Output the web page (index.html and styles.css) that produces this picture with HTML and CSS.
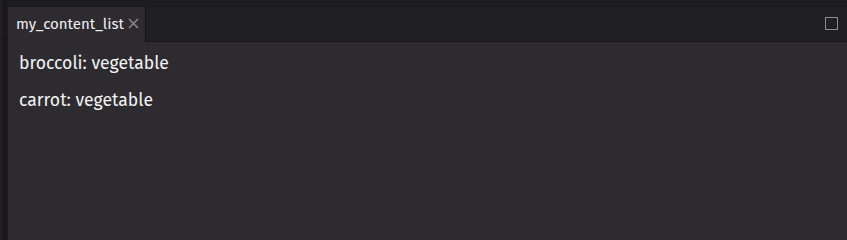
FILE: index.html
```html
<!DOCTYPE html>
<html>
<head>
<meta charset="utf-8">
<link rel="stylesheet" href="styles.css">
</head>
<body>
<div class="app">
  <div class="gutter"><div class="gutter-line"></div></div>
  <div class="main">
    <div class="topstrip"></div>
    <div class="panel">
      <div class="header">
        <div class="tab">
          <span class="tab-title">my_content_list</span>
          <svg class="tab-close" width="11" height="11" viewBox="0 0 11 11"><path d="M1 1L10 10M10 1L1 10" stroke="#8a898c" stroke-width="1.5" fill="none"/></svg>
        </div>
        <div class="header-fill"></div>
      </div>
      <div class="content">
        <div class="item">broccoli: vegetable</div>
        <div class="item">carrot: vegetable</div>
      </div>
    </div>
  </div>
  <div class="max-btn"></div>
</div>
</body>
</html>
```
FILE: styles.css
```css
html, body {
  margin: 0;
  padding: 0;
  height: 100%;
  background: #2d2b2f;
  font-family: "Fira Sans", "Open Sans", "Noto Sans", sans-serif;
  overflow: hidden;
}
.app {
  display: flex;
  height: 100vh;
}
.gutter {
  width: 8px;
  display: flex;
  flex-direction: column;
  background: #1a1a1c;
  border-left: 2px solid #212123;
  box-sizing: border-box;
}
.gutter-line { height: 40px; border-bottom: 1px solid #141415; box-sizing: border-box; }
.main {
  flex: 1;
  display: flex;
  flex-direction: column;
}
.topstrip {
  height: 7px;
  background: #1d1c1f;
  box-sizing: border-box;
  border-bottom: 1px solid #19181a;
}
.panel {
  flex: 1;
  display: flex;
  flex-direction: column;
  background: #2d2b2f;
}
.header {
  height: 35px;
  display: flex;
  align-items: stretch;
  background: #201f22;
  box-sizing: border-box;
}
.tab {
  width: 138px;
  box-sizing: border-box;
  background: #2d2b2f;
  border-right: 1px solid #151416;
  display: flex;
  align-items: center;
  padding-left: 8px;
  gap: 4px;
}
.tab-title {
  color: #f0f0f0;
  font-size: 15px;
  position: relative;
  top: -1px;
}
.tab-close { position: relative; top: -1px; }
.header-fill {
  flex: 1;
  border-bottom: 1px solid #161517;
}
.max-btn {
  width: 13px;
  height: 13px;
  box-sizing: border-box;
  border: 1.5px solid #8d8c8f;
  position: absolute;
  left: 825px;
  top: 17px;
}
.content {
  flex: 1;
  padding: 9px 11px;
}
.item {
  color: #f2f2f2;
  font-size: 17.6px;
  line-height: 26px;
  margin-bottom: 11px;
}
```
